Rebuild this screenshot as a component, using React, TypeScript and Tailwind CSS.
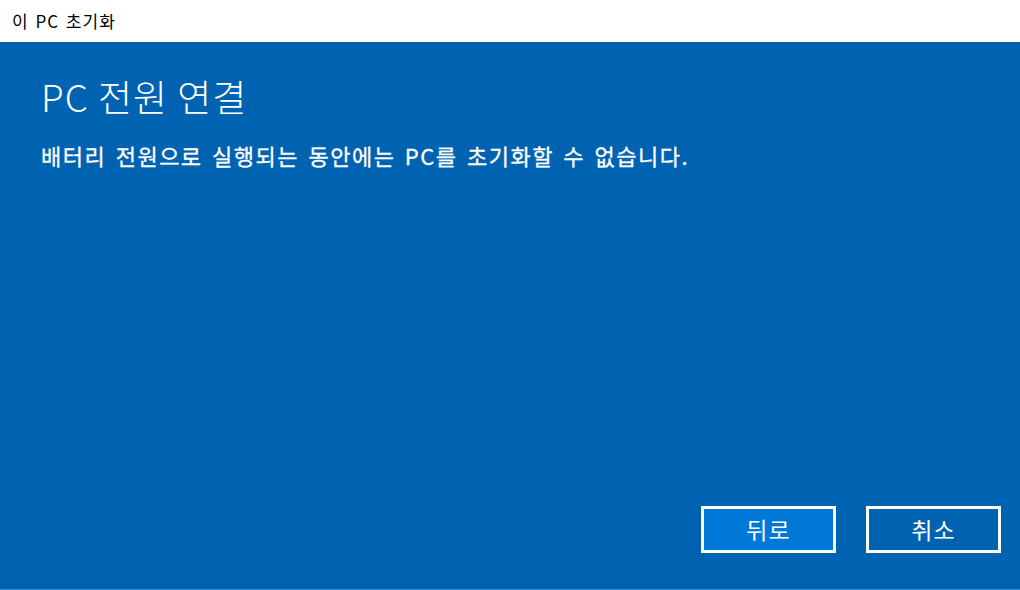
export default function App() {
  const font = { fontFamily: '"Noto Sans CJK KR", "Noto Sans", sans-serif' };
  return (
    <div className="w-[1020px] h-[590px] flex flex-col bg-white overflow-hidden" style={font}>
      <div className="h-[42px] flex items-center px-[12px] text-[17px] tracking-[1px] [word-spacing:2px] text-black">이 PC 초기화</div>

      <div className="flex-1 flex flex-col bg-[#0063b1] text-white border-b border-[#3b8fd8]">
        <div className="px-[41px] pt-[26px]">
          <h1 className="text-[37px] font-light leading-[56px] tracking-[1px]">PC 전원 연결</h1>
          <p className="mt-[16px] text-[22px] leading-[30px] font-normal tracking-[1.5px] [word-spacing:3px] [-webkit-text-stroke:0.3px_white]">
            배터리 전원으로 실행되는 동안에는 PC를 초기화할 수 없습니다.
          </p>
        </div>

        <div className="mt-auto flex justify-end gap-[30px] pr-[19px] pb-[36px]">
          <button className="w-[135px] h-[47px] border-[3px] border-white bg-[#0078d7] text-[23px] tracking-[1px]">뒤로</button>
          <button className="w-[135px] h-[47px] border-[3px] border-white bg-[#0063b1] text-[23px] tracking-[1px]">취소</button>
        </div>
      </div>
    </div>
  );
}
